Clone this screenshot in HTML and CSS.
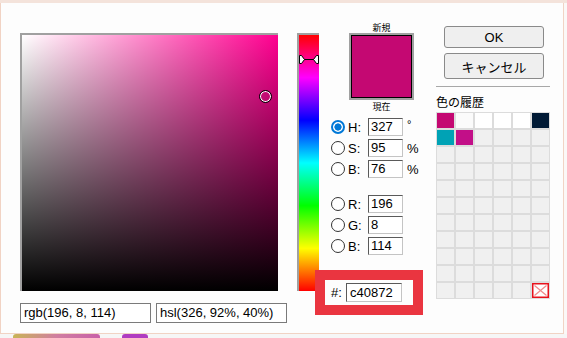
FILE: index.html
```html
<!DOCTYPE html>
<html lang="ja">
<head>
<meta charset="utf-8">
<link rel="stylesheet" href="styles.css">
</head>
<body>
<div class="topstrip"></div>
<div class="dialog">
  <div class="col-a">
    <div class="sb">
      <div class="sb-marker"></div>
    </div>
    <div class="strings">
      <div class="str">rgb(196, 8, 114)</div>
      <div class="str">hsl(326, 92%, 40%)</div>
    </div>
  </div>

  <div class="hue">
    <svg class="hue-marker" width="20" height="9" viewBox="0 0 20 9">
      <line x1="4" y1="4.5" x2="16" y2="4.5" stroke="#000" stroke-width="1"/>
      <polygon points="0.5,0.5 2.5,0.5 5.5,4.5 2.5,8.5 0.5,8.5" fill="#fff" stroke="#000" stroke-width="1"/>
      <polygon points="19.5,0.5 17.5,0.5 14.5,4.5 17.5,8.5 19.5,8.5" fill="#fff" stroke="#000" stroke-width="1"/>
    </svg>
  </div>

  <div class="col-c">
    <div class="caption">新規</div>
    <div class="preview"><div class="preview-inner"></div></div>
    <div class="caption now">現在</div>
    <div class="fields">
      <div class="row"><span class="radio sel"></span><span class="lbl">H:</span><span class="num">327</span><span class="unit deg">°</span></div>
      <div class="row"><span class="radio"></span><span class="lbl">S:</span><span class="num">95</span><span class="unit">%</span></div>
      <div class="row"><span class="radio"></span><span class="lbl">B:</span><span class="num">76</span><span class="unit">%</span></div>
      <div class="row spaced"><span class="radio"></span><span class="lbl">R:</span><span class="num">196</span></div>
      <div class="row"><span class="radio"></span><span class="lbl">G:</span><span class="num">8</span></div>
      <div class="row"><span class="radio"></span><span class="lbl">B:</span><span class="num">114</span></div>
    </div>
    <div class="hexrow"><span class="hexlbl">#:</span><span class="num hex">c40872</span></div>
  </div>

  <div class="col-d">
    <div class="btn">OK</div>
    <div class="btn cancel">キャンセル</div>
    <div class="sep"></div>
    <div class="hist-title">色の履歴</div>
    <div class="grid">
      <div class="cell c-mag"></div><div class="cell c-w1"></div><div class="cell c-w"></div><div class="cell c-w"></div><div class="cell c-w"></div><div class="cell c-navy"></div>
      <div class="cell c-teal"></div><div class="cell c-mag2"></div><div class="cell"></div><div class="cell"></div><div class="cell"></div><div class="cell"></div>
      <div class="cell"></div><div class="cell"></div><div class="cell"></div><div class="cell"></div><div class="cell"></div><div class="cell"></div>
      <div class="cell"></div><div class="cell"></div><div class="cell"></div><div class="cell"></div><div class="cell"></div><div class="cell"></div>
      <div class="cell"></div><div class="cell"></div><div class="cell"></div><div class="cell"></div><div class="cell"></div><div class="cell"></div>
      <div class="cell"></div><div class="cell"></div><div class="cell"></div><div class="cell"></div><div class="cell"></div><div class="cell"></div>
      <div class="cell"></div><div class="cell"></div><div class="cell"></div><div class="cell"></div><div class="cell"></div><div class="cell"></div>
      <div class="cell"></div><div class="cell"></div><div class="cell"></div><div class="cell"></div><div class="cell"></div><div class="cell"></div>
      <div class="cell"></div><div class="cell"></div><div class="cell"></div><div class="cell"></div><div class="cell"></div><div class="cell"></div>
      <div class="cell"></div><div class="cell"></div><div class="cell"></div><div class="cell"></div><div class="cell"></div><div class="cell"></div>
      <div class="cell"></div><div class="cell"></div><div class="cell"></div><div class="cell"></div><div class="cell"></div>
      <div class="cell clear">
        <svg width="17" height="15" viewBox="0 0 17 15">
          <rect x="0.75" y="0.75" width="15.5" height="13.5" fill="#fff" stroke="#e8121c" stroke-width="1.5"/>
          <line x1="2.5" y1="2.5" x2="14.5" y2="12.5" stroke="#f08a8a" stroke-width="1.2"/>
          <line x1="14.5" y1="2.5" x2="2.5" y2="12.5" stroke="#f08a8a" stroke-width="1.2"/>
        </svg>
      </div>
    </div>
  </div>

  <div class="highlight"></div>
</div>
<div class="below">
  <div class="blob blob-a"></div>
  <div class="blob blob-b"></div>
</div>
</body>
</html>
```

FILE: styles.css
```css
* { box-sizing: border-box; }
html, body { margin: 0; padding: 0; }
body {
  width: 567px;
  height: 338px;
  overflow: hidden;
  background: #fbf8f7;
  font-family: "Liberation Sans", Arial, "Noto Sans CJK JP", sans-serif;
  font-size: 13px;
  color: #000;
}
.topstrip { height: 3px; background: #f4e3db; }
.dialog {
  position: relative;
  width: 564px;
  height: 331px;
  background: #fdfdfd;
  border: 1px solid #f1d3c4;
  border-top: 0;
  display: flex;
  align-items: flex-start;
}

/* saturation / brightness */
.col-a {
  margin-left: 19px;
  padding-top: 30px;
  width: 267px;
  display: flex;
  flex-direction: column;
}
.sb {
  position: relative;
  width: 258px;
  height: 258px;
  border-top: 2px solid #a0a0a0;
  border-left: 2px solid #a0a0a0;
  background:
    linear-gradient(to top, #000, rgba(0, 0, 0, 0)),
    linear-gradient(to right, #fff, #ff0090);
}
.sb-marker {
  position: absolute;
  left: 237px;
  top: 55px;
  width: 13px;
  height: 13px;
  border: 1px solid #000;
  border-radius: 50%;
  box-shadow: inset 0 0 0 1px #fff;
}
.strings { display: flex; gap: 5px; margin-top: 12px; }
.str {
  width: 131px;
  height: 20px;
  border: 1px solid #7a7a7a;
  background: #fff;
  padding: 0 3px;
  line-height: 18px;
  font-size: 13px;
  white-space: nowrap;
}

/* hue */
.hue {
  position: relative;
  margin-left: 10px;
  margin-top: 30px;
  width: 22px;
  height: 258px;
  border-top: 2px solid #a0a0a0;
  border-left: 2px solid #a0a0a0;
  background: linear-gradient(to bottom, #f00, #f0f, #00f, #0ff, #0f0, #ff0, #f00);
}
.hue-marker { position: absolute; left: 0; top: 20px; display: block; }

/* values */
.col-c {
  margin-left: 12px;
  width: 92px;
  padding-top: 19px;
  display: flex;
  flex-direction: column;
}
.caption {
  width: 65px;
  margin-left: 18px;
  text-align: center;
  font-family: "Noto Sans CJK JP", sans-serif;
  font-size: 9px;
  line-height: 11px;
}
.caption.now { margin-top: 1px; }
.preview {
  margin-left: 18px;
  width: 65px;
  height: 67px;
  border: 2px solid #a0a0a0;
}
.preview-inner { height: 100%; border: 1px solid #000; background: #c40872; }
.fields { margin-top: 6px; display: flex; flex-direction: column; gap: 3px; }
.row { display: flex; align-items: center; height: 18px; }
.row.spaced { margin-top: 14px; }
.radio {
  width: 14px;
  height: 14px;
  border: 1px solid #333;
  border-radius: 50%;
  background: #fff;
  flex: none;
}
.radio.sel {
  border: 2px solid #0078d7;
  background: radial-gradient(circle at center, #0078d7 0 3.3px, #fff 3.9px);
}
.lbl { width: 20px; margin-left: 3px; font-size: 13px; }
.num {
  width: 35px;
  height: 18px;
  border: 1px solid;
  border-color: #5a5a5a #c4c4c4 #c4c4c4 #5a5a5a;
  background: #fff;
  padding-left: 2px;
  line-height: 16px;
  font-size: 13px;
}
.unit { margin-left: 4px; font-size: 13px; }
.unit.deg { align-self: flex-start; font-size: 11px; line-height: 12px; }
.hexrow { display: flex; align-items: center; margin-top: 28px; height: 19px; }
.hexlbl { width: 15px; font-size: 13px; }
.num.hex { width: 56px; height: 19px; line-height: 17px; padding-left: 3px; }

/* right column */
.col-d {
  margin-left: 13px;
  width: 114px;
  padding-top: 23px;
  display: flex;
  flex-direction: column;
}
.btn {
  margin-left: 8px;
  width: 100px;
  height: 22px;
  border: 1px solid #8a8a8a;
  border-radius: 3px;
  background: #efefef;
  display: flex;
  align-items: center;
  justify-content: center;
  font-size: 13px;
  font-family: "Liberation Sans", "Noto Sans CJK JP", sans-serif;
}
.btn.cancel { height: 26px; margin-top: 5px; }
.sep { margin-top: 7px; height: 1px; background: #a8a8a8; }
.hist-title {
  margin-top: 8px;
  line-height: 14px;
  font-size: 12px;
  font-family: "Noto Sans CJK JP", sans-serif;
}
.grid {
  margin-top: 3px;
  width: 114px;
  display: grid;
  grid-template-columns: repeat(6, 17px);
  grid-auto-rows: 15px;
  gap: 2px;
  padding: 1px;
  background: #dcdcdc;
}
.cell { background: #f0f0f0; }
.c-mag { background: #c40872; }
.c-w1 { background: #fbfbfb; }
.c-w { background: #fff; }
.c-navy { background: #001a35; }
.c-teal { background: #00a2b5; }
.c-mag2 { background: #c20f88; }
.cell.clear svg { display: block; }

/* annotation */
.highlight {
  position: absolute;
  left: 314px;
  top: 267px;
  width: 108px;
  height: 45px;
  border: 10px solid #ea3540;
}

/* background below the dialog */
.below { display: flex; height: 4px; background: #f6f6f6; }
.blob { height: 4px; border-radius: 3px 3px 0 0; }
.blob-a { margin-left: 13px; width: 87px; background: linear-gradient(to right, #c8b456, #d07ea0, #c860a8); }
.blob-b { margin-left: 22px; width: 26px; background: #b03cc0; }
```
